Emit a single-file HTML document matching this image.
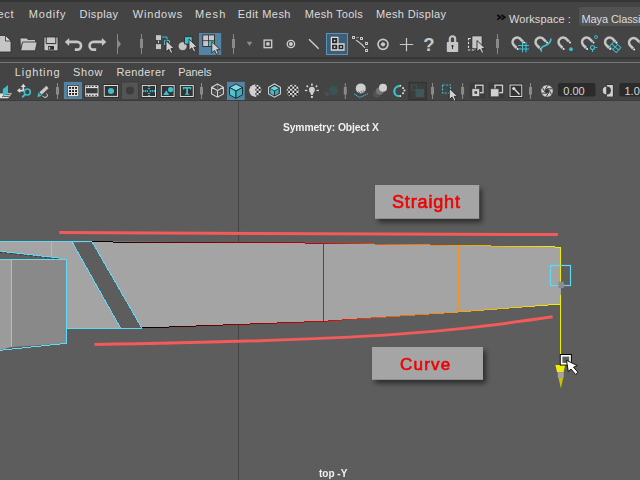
<!DOCTYPE html>
<html><head><meta charset="utf-8">
<style>
html,body{margin:0;padding:0;width:640px;height:480px;overflow:hidden;background:#444444;}
body{position:relative;font-family:"Liberation Sans",sans-serif;}
.a{position:absolute;}
.m{position:absolute;font-size:12px;line-height:14px;color:#dcdcdc;white-space:nowrap;}
svg{position:absolute;left:0;top:0;}
.lb{position:absolute;font-weight:bold;color:#f00000;white-space:nowrap;will-change:transform;}
.hud{position:absolute;font-weight:bold;color:#f0f0f0;white-space:nowrap;will-change:transform;}
</style></head><body>
<div class="a" style="left:0;top:0;width:640px;height:2px;background:#353535"></div>
<div class="m" style="left:-20.5px;top:7px;font-size:11px;letter-spacing:0.7px">Select</div>
<div class="m" style="left:28.7px;top:7px;font-size:11px;letter-spacing:0.86px">Modify</div>
<div class="m" style="left:79.6px;top:7px;font-size:11px;letter-spacing:0.4px">Display</div>
<div class="m" style="left:132.8px;top:7px;font-size:11px;letter-spacing:0.8px">Windows</div>
<div class="m" style="left:195px;top:7px;font-size:11px;letter-spacing:1.17px">Mesh</div>
<div class="m" style="left:237.8px;top:7px;font-size:11px;letter-spacing:0.47px">Edit Mesh</div>
<div class="m" style="left:304.8px;top:7px;font-size:11px;letter-spacing:0.29px">Mesh Tools</div>
<div class="m" style="left:375.9px;top:7px;font-size:11px;letter-spacing:0.37px">Mesh Display</div>
<svg width="640" height="30" style="left:0;top:0"><path d="M497.3,15 L500.6,17.3 L497.3,19.6 M501.5,15 L504.8,17.3 L501.5,19.6" fill="none" stroke="#0a0a0a" stroke-width="1.7"/></svg>
<div class="m" style="left:509px;top:11.5px;font-size:11px;letter-spacing:0.1px">Workspace :</div>
<div class="a" style="left:579px;top:7px;width:70px;height:19px;background:#525252;border-radius:3px"></div>
<div class="m" style="left:581.5px;top:11.5px;font-size:11px;letter-spacing:-0.1px">Maya Classic</div>
<div class="a" style="left:0;top:57px;width:640px;height:2px;background:#363636"></div>
<div class="a" style="left:0;top:59px;width:640px;height:3px;background:#414141"></div>
<div class="a" style="left:0;top:62px;width:640px;height:1px;background:#787878"></div>
<div class="m" style="left:14.8px;top:65px;font-size:11px;letter-spacing:0.89px">Lighting</div>
<div class="m" style="left:73px;top:65px;font-size:11px;letter-spacing:0.67px">Show</div>
<div class="m" style="left:116.4px;top:65px;font-size:11px;letter-spacing:0.41px">Renderer</div>
<div class="m" style="left:178.2px;top:65px;font-size:11px;letter-spacing:-0.05px">Panels</div>
<div class="a" style="left:0;top:100px;width:640px;height:1px;background:#3c3c3c"></div>
<div class="a" style="left:0;top:101px;width:640px;height:379px;background:#5d5d5d"></div>
<svg width="640" height="480" viewBox="0 0 640 480">
<defs>
 <linearGradient id="eg" gradientUnits="userSpaceOnUse" x1="92" y1="0" x2="560.5" y2="0">
  <stop offset="0" stop-color="#000000"/>
  <stop offset="0.145" stop-color="#600000"/>
  <stop offset="0.337" stop-color="#a00000"/>
  <stop offset="0.494" stop-color="#d40000"/>
  <stop offset="0.636" stop-color="#e86010"/>
  <stop offset="0.782" stop-color="#f0a010"/>
  <stop offset="0.892" stop-color="#f0c800"/>
  <stop offset="1" stop-color="#f4f000"/>
 </linearGradient>
 <linearGradient id="eg2" gradientUnits="userSpaceOnUse" x1="141.8" y1="0" x2="560.5" y2="0">
  <stop offset="0" stop-color="#000000"/>
  <stop offset="0.235" stop-color="#900000"/>
  <stop offset="0.434" stop-color="#d40000"/>
  <stop offset="0.593" stop-color="#e86010"/>
  <stop offset="0.757" stop-color="#f0a010"/>
  <stop offset="0.879" stop-color="#f0c800"/>
  <stop offset="1" stop-color="#f4f000"/>
 </linearGradient>
 <filter id="sh" x="-30%" y="-60%" width="160%" height="220%"><feGaussianBlur stdDeviation="2.6"/></filter>
</defs>
<line x1="238.5" y1="101" x2="238.5" y2="480" stroke="#444" stroke-width="1"/>
<!-- main face -->
<path d="M0,241.5 L92,241.5 L323.4,243 L458.6,245.4 L560.5,247 L560.5,304 L458.6,312 L323.4,321.3 L141.8,328 L66.5,328.4 L66.5,259 L0,259 Z" fill="#a4a4a4"/>
<!-- dark strip (hole) -->
<path d="M72.3,242.3 L92.2,242 L141.8,328 L120.5,328 Z" fill="#5d5d5d"/>
<!-- wedge -->
<path d="M0,251.3 L59,258 L59,259 L0,259 Z" fill="#5f5f5f"/>
<!-- inner panels -->
<path d="M11.3,259 H66.5 V343.5 L11.3,347 Z" fill="#898989"/>
<path d="M-1,259 H11.3 V347 L-1,350.2 Z" fill="#9b9b9b"/>
<!-- edges -->
<g fill="none" stroke-width="1" shape-rendering="crispEdges">
 <path d="M0,241.6 H92" stroke="#5edaf8"/>
 <path d="M51.3,241.6 V257.3" stroke="#5edaf8"/>
 <path d="M0,251.3 L59,258" stroke="#5edaf8"/>
 <path d="M0,259 H66.5" stroke="#5edaf8"/>
 <path d="M11.3,259 V347" stroke="#5edaf8"/>
 <path d="M66.5,259 V343.5" stroke="#5edaf8"/>
 <path d="M0,350.3 L66.5,343.3" stroke="#5edaf8"/>
 <path d="M66.5,328.4 H141.8" stroke="#5edaf8"/>
 <path d="M72.3,242.3 L120.5,328" stroke="#5edaf8"/>
 <path d="M92.2,242 L141.8,328" stroke="#5edaf8"/>
 <path d="M92,241.9 L323.4,243.1 L458.6,245.5 L560.5,247.1" stroke="url(#eg)"/>
 <path d="M141.8,328 L323.4,321.3 L458.6,312 L560.5,304" stroke="url(#eg2)"/>
 <path d="M323.4,242.9 V321.3" stroke="#cc1414"/>
 <path d="M458.6,245.4 V312" stroke="#ee9424"/>
 <path d="M560.5,247 V281.7 M560.5,295 V354" stroke="#f0ee00"/>
</g>
<path d="M0,252.3 L59,259" stroke="#2a2a2a" stroke-width="0.8" stroke-dasharray="2,3"/>
<!-- annotation lines -->
<path d="M59.4,232.6 L557.9,234.6" stroke="#f55a5a" stroke-width="3"/>
<path d="M94.5,344.6 C386.6,339.8 450.9,331.4 552.6,316.8" fill="none" stroke="#f55a5a" stroke-width="3"/>
<!-- manipulator -->
<rect x="550.5" y="265.5" width="20" height="20" fill="none" stroke="#5edaf8" stroke-width="1.2"/>
<rect x="558.3" y="281.7" width="5.5" height="6.3" fill="#8c8c8c"/><rect x="558.3" y="288" width="2.7" height="7" fill="#a4a4a4"/>
<path d="M555.4,365 H565.2 L563.5,372.3 H557.1 Z" fill="#f2ec00"/>
<rect x="557.8" y="372.3" width="6" height="5.5" fill="#a4a4a4"/>
<path d="M558.5,377.8 H563.2 L560.9,388.5 Z" fill="#c9c200"/>
<rect x="560.3" y="354.5" width="11" height="10.5" fill="none" stroke="#000" stroke-width="1"/>
<rect x="561.6" y="355.8" width="8.4" height="7.9" fill="none" stroke="#fff" stroke-width="1.6"/>
<path d="M566.5,360.3 L568.3,371.6 L570.9,369 L575.6,374.4 L578,372.4 L573.5,367.2 L577.2,365.6 Z" fill="#fff" stroke="#000" stroke-width="0.9" stroke-linejoin="round"/>
<!-- labels -->
<rect x="378" y="189" width="104" height="33.5" fill="#000" opacity="0.5" filter="url(#sh)"/>
<rect x="375" y="185" width="104.2" height="33.8" fill="#a5a5a5"/>
<rect x="375" y="351" width="111" height="32.5" fill="#000" opacity="0.5" filter="url(#sh)"/>
<rect x="372" y="347" width="111" height="32.8" fill="#a5a5a5"/>
</svg>

<div class="hud" style="left:283px;top:121.5px;font-size:10.3px;line-height:12px;letter-spacing:-0.12px">Symmetry: Object X</div>
<div class="hud" style="left:319px;top:468px;font-size:10px;line-height:12px">top -Y</div>
<div class="lb" style="left:392px;top:192px;font-size:18px;line-height:20px;font-weight:normal;-webkit-text-stroke:0.6px #f00000;letter-spacing:0.85px">Straight</div>
<div class="lb" style="left:400px;top:355px;font-size:17px;line-height:19px;letter-spacing:1.2px;font-weight:normal;-webkit-text-stroke:0.6px #f00000">Curve</div>
<svg width="640" height="101" viewBox="0 0 640 101">
<defs>
 <g id="cur"><path d="M0,0 L0,11.3 L2.8,8.8 L4.8,12.9 L6.7,12 L4.9,8.1 L8.4,8.1 Z" fill="#cfcfcf" stroke="#2a2a2a" stroke-width="0.9" stroke-linejoin="round"/></g>
 <g id="mag"><path d="M-0.4,6 L-3.18,3.18 A4.5,4.5 0 0 1 3.18,-3.18 L6,-0.4" fill="none" stroke="#c4c4c4" stroke-width="2.6"/>
   <circle cx="0.6" cy="7" r="1" fill="#eee"/><circle cx="7" cy="0.6" r="1" fill="#eee"/></g>
 <g id="sep"><rect x="-0.5" y="0" width="1" height="20" fill="#8a8a8a"/><rect x="-1.5" y="5" width="3" height="9" fill="#8a8a8a"/></g>
 <g id="sep2"><rect x="-0.5" y="0" width="1" height="16" fill="#8a8a8a"/><rect x="-1.5" y="4" width="3" height="7.5" fill="#8a8a8a"/></g>
 <pattern id="chk" width="4.2" height="4.2" patternUnits="userSpaceOnUse" x="0.3" y="0.5"><rect width="4.2" height="4.2" fill="#1e1e1e"/><rect width="2.1" height="2.1" fill="#e8e8e8"/><rect x="2.1" y="2.1" width="2.1" height="2.1" fill="#e8e8e8"/></pattern>
</defs>
<!-- ===== row 1 toolbar ===== -->
<!-- new scene -->
<path d="M-3,35.5 H5.5 L11,41 V52 H-3 Z" fill="#c6c6c6" stroke="#2e2e2e" stroke-width="0.8"/>
<path d="M5.5,35.5 L11,41 H5.5 Z" fill="#d8d8d8" stroke="#2e2e2e" stroke-width="0.8"/>
<!-- open -->
<path d="M20,38 H26.5 L28,39.5 H35.5 V43 H22.5 L20.5,50.8 Z" fill="#c6c6c6" stroke="#2e2e2e" stroke-width="0.8"/>
<path d="M22.5,42 H37.2 L35.3,50.8 H20.6 Z" fill="#c6c6c6" stroke="#2e2e2e" stroke-width="0.8"/>
<!-- save -->
<path d="M44,37 H58 V50.8 H45.5 L44,49.3 Z" fill="#c6c6c6" stroke="#2e2e2e" stroke-width="0.8"/>
<path d="M46.2,36.6 V43.6 H55.8 V36.6" fill="none" stroke="#2e2e2e" stroke-width="1"/>
<rect x="48" y="46" width="6" height="3.7" fill="#2e2e2e"/><rect x="48.8" y="47" width="1.3" height="2" fill="#c6c6c6"/>
<!-- undo / redo -->
<path d="M69,41.9 H77.2 A3.85,3.85 0 0 1 77.2,49.6 H74.8" fill="none" stroke="#c6c6c6" stroke-width="2.6"/>
<path d="M64.8,41.9 L69.2,37.9 V45.9 Z" fill="#c6c6c6"/>
<path d="M102,41.9 H93.4 A3.85,3.85 0 0 0 93.4,49.6 H96.2" fill="none" stroke="#c6c6c6" stroke-width="2.6"/>
<path d="M106.3,41.9 L101.9,37.9 V45.9 Z" fill="#c6c6c6"/>
<!-- triangle separator -->
<rect x="117" y="34" width="1" height="20" fill="#8a8a8a"/>
<path d="M117.5,39.5 L121,44 L117.5,48.5 Z" fill="#8a8a8a"/>
<use href="#sep" x="141.5" y="34"/>
<!-- hierarchy -->
<rect x="155.5" y="34.8" width="6" height="5.6" fill="#c6c6c6" stroke="#2e2e2e" stroke-width="0.7"/>
<rect x="158" y="40.5" width="1" height="2.5" fill="#c6c6c6"/>
<rect x="155.5" y="43.8" width="6" height="5.8" fill="#c6c6c6" stroke="#2e2e2e" stroke-width="0.7"/>
<path d="M162,37 H167 V39.5" fill="none" stroke="#3cc0cf" stroke-width="1"/>
<path d="M164.5,45 V40.5 H169.5 V43" fill="none" stroke="#3cc0cf" stroke-width="1"/>
<use href="#cur" x="166" y="40.5"/>
<!-- object -->
<circle cx="182.6" cy="46.2" r="4.4" fill="#c6c6c6" stroke="#2e2e2e" stroke-width="0.6"/>
<rect x="184.6" y="36.7" width="7.6" height="7.3" fill="#3cc0cf" stroke="#2a2a2a" stroke-width="0.8"/>
<use href="#cur" x="189" y="39.1"/>
<!-- component (highlighted) -->
<rect x="199" y="33" width="22.2" height="22" fill="#5284a6"/>
<rect x="202.3" y="34.5" width="12.6" height="12.4" fill="#2e2e2e"/>
<rect x="203.2" y="35.4" width="5" height="4.9" fill="#c8c8c8"/><rect x="209" y="35.4" width="5" height="4.9" fill="#c8c8c8"/>
<rect x="203.2" y="41.1" width="5" height="4.9" fill="#c8c8c8"/><rect x="209" y="41.1" width="5" height="4.9" fill="#3cc0cf"/>
<use href="#cur" x="211.8" y="41.6"/>
<use href="#sep" x="233.5" y="34"/>
<path d="M246.7,41.8 H252.3 L249.5,46 Z" fill="#8a8a8a"/>
<rect x="264.1" y="40.1" width="7.6" height="7.6" fill="none" stroke="#d0d0d0" stroke-width="1.3"/>
<rect x="266.3" y="42.3" width="3.2" height="3.2" fill="#d0d0d0"/>
<circle cx="290.9" cy="44" r="3.7" fill="none" stroke="#d0d0d0" stroke-width="1.3"/>
<circle cx="290.9" cy="44" r="1.9" fill="#d0d0d0"/>
<line x1="309" y1="39.2" x2="318.7" y2="48.7" stroke="#d0d0d0" stroke-width="1.3"/>
<!-- outlined toggle -->
<rect x="326.5" y="33.5" width="21" height="21" fill="#3d5e77" stroke="#5a92ba" stroke-width="1"/>
<path d="M331.4,37.3 H337.9 V44 H344 V50 H331.4 Z" fill="#2a2a2a" stroke="#dadada" stroke-width="1.3"/>
<path d="M331.4,44 H337.9 V50" fill="none" stroke="#dadada" stroke-width="1.3"/>
<circle cx="334.6" cy="40.6" r="0.9" fill="#e0e0e0"/><circle cx="334.6" cy="47" r="0.9" fill="#e0e0e0"/><circle cx="341" cy="47" r="0.9" fill="#e0e0e0"/>
<!-- curve points -->
<path d="M356,40 Q362,44 365,48" fill="none" stroke="#c8c8c8" stroke-width="1.1"/>
<path d="M356.2,37.5 H358.8 M364.8,41 L365.5,42 M367,47.5 V48.5" stroke="#aaa" stroke-width="0.8"/>
<rect x="351.7" y="35.7" width="3.6" height="3.6" fill="#d8d8d8" stroke="#2a2a2a" stroke-width="0.7"/><circle cx="353.5" cy="37.5" r="0.6" fill="#2a2a2a"/><rect x="359.7" y="36.7" width="3.6" height="3.6" fill="#d8d8d8" stroke="#2a2a2a" stroke-width="0.7"/><circle cx="361.5" cy="38.5" r="0.6" fill="#2a2a2a"/><rect x="364.7" y="41.7" width="3.6" height="3.6" fill="#d8d8d8" stroke="#2a2a2a" stroke-width="0.7"/><circle cx="366.5" cy="43.5" r="0.6" fill="#2a2a2a"/><rect x="364.7" y="48.7" width="3.6" height="3.6" fill="#d8d8d8" stroke="#2a2a2a" stroke-width="0.7"/><circle cx="366.5" cy="50.5" r="0.6" fill="#2a2a2a"/>
<circle cx="383" cy="44.3" r="5" fill="none" stroke="#c8c8c8" stroke-width="1.7"/>
<circle cx="383" cy="44.3" r="2.1" fill="#c8c8c8"/>
<path d="M399.8,44.5 H413.2 M406.5,37.9 V51.2" stroke="#c8c8c8" stroke-width="1.2"/>
<text x="423.2" y="51.4" font-family="Liberation Sans" font-weight="bold" font-size="18.5" fill="#c8c8c8">?</text>
<!-- lock -->
<path d="M449.8,42.5 V39 A2.7,2.7 0 0 1 455.2,39 V42.5" fill="none" stroke="#c6c6c6" stroke-width="2.1"/>
<rect x="446.8" y="42" width="11.4" height="10" rx="0.8" fill="#c6c6c6"/>
<circle cx="452.5" cy="46" r="1.1" fill="#2e2e2e"/><rect x="452" y="46" width="1" height="3" fill="#2e2e2e"/>
<!-- select dashed -->
<rect x="468.5" y="38.5" width="6.5" height="11.5" fill="none" stroke="#dcdcdc" stroke-width="1.1" stroke-dasharray="2.2,1.6"/>
<rect x="472" y="36" width="10" height="12.5" fill="#c6c6c6" stroke="#2e2e2e" stroke-width="0.6"/>
<use href="#cur" x="477" y="40.5"/>
<use href="#sep" x="497.5" y="34"/>
<!-- magnets -->
<use href="#mag" x="517" y="42"/>
<path d="M522.5,42 V52.3 M526,42 V52.3 M518,45.5 H529 M518,49 H529" stroke="#3cc0cf" stroke-width="1.1"/>
<use href="#mag" x="540" y="42"/>
<path d="M550.9,38.5 C551.5,44 546,45 543,46.5 C541,47.5 541,50 541.5,51.8" fill="none" stroke="#3cc0cf" stroke-width="1.6"/>
<use href="#mag" x="563" y="42"/>
<circle cx="571" cy="49.2" r="1.9" fill="#3cc0cf"/>
<use href="#mag" x="586.5" y="42"/>
<circle cx="596" cy="37" r="1.5" fill="none" stroke="#3cc0cf" stroke-width="0.9"/>
<circle cx="592.5" cy="47.5" r="2" fill="none" stroke="#3cc0cf" stroke-width="1.1"/>
<path d="M592.5,50 V52 M595.3,47.5 H597.3" stroke="#3cc0cf" stroke-width="1"/>
<g transform="translate(615.2,47) rotate(42)" fill="none" stroke="#3cc0cf" stroke-width="0.95"><rect x="-4.6" y="-3.4" width="9.2" height="6.8"/><path d="M-4.6,0 H4.6 M0,-3.4 V3.4"/></g>
<use href="#mag" x="609.5" y="42"/>
<use href="#mag" x="633.5" y="42.5"/>

<!-- ===== row 2 panel toolbar ===== -->
<path d="M0,93.6 L12,93.3 L8.2,98.2 L0,98.2 Z" fill="#e0e0e0"/>
<path d="M3,94.7 L10.4,94.6 M2,96.5 L9,96.4" stroke="#3a3a3a" stroke-width="0.8"/>
<path d="M2.8,89.2 L8,85 V92.8 L2.8,97 Z" fill="#3cc0cf"/>
<!-- move magnify -->
<path d="M23.3,86.5 V90.6 H19.5" fill="none" stroke="#dcdcdc" stroke-width="1.6"/>
<path d="M23.3,83.8 L20.8,87 H25.8 Z M17,90.5 L20.2,88 V93 Z" fill="#dcdcdc"/>
<circle cx="27.3" cy="92" r="3" fill="none" stroke="#3cc0cf" stroke-width="1.5"/>
<line x1="25" y1="94.5" x2="22.2" y2="97.3" stroke="#3cc0cf" stroke-width="1.8"/>
<!-- brush -->
<line x1="47.5" y1="87" x2="40.5" y2="93.5" stroke="#c8c8c8" stroke-width="3.2"/>
<path d="M38.2,92.5 L41.6,95.8 L37.5,97.3 Z" fill="#3cc0cf"/>
<path d="M42.5,96 Q45,98.5 47,96.8 Q48.3,95 46.5,93.5" fill="none" stroke="#d0d0d0" stroke-width="1"/>
<use href="#sep2" x="57.5" y="83"/>
<!-- grid highlighted -->
<rect x="63.9" y="81.9" width="18.1" height="17.2" fill="#5284a6"/>
<rect x="67.1" y="85.1" width="11.8" height="11.8" fill="#2a2a2a"/>
<rect x="67.8" y="85.8" width="10.6" height="10.6" fill="#e4e4e4"/>
<g fill="#1a1a1a"><rect x="69.1" y="87" width="1.9" height="1.9"/><rect x="72.1" y="87" width="1.9" height="1.9"/><rect x="75.1" y="87" width="1.9" height="1.9"/>
<rect x="69.1" y="90.1" width="1.9" height="1.9"/><rect x="72.1" y="90.1" width="1.9" height="1.9"/><rect x="75.1" y="90.1" width="1.9" height="1.9"/>
<rect x="69.1" y="93" width="1.9" height="1.9"/><rect x="72.1" y="93" width="1.9" height="1.9"/><rect x="75.1" y="93" width="1.9" height="1.9"/></g>
<!-- film gate -->
<rect x="84.5" y="84.7" width="14.7" height="12.5" fill="#2a2a2a"/>
<rect x="85.2" y="85.3" width="13.3" height="11.3" fill="#e0e0e0"/>
<rect x="86" y="88.1" width="11.6" height="5.3" fill="#3a3a3a"/>
<g fill="#2a2a2a"><rect x="86.2" y="85.8" width="1.7" height="1" /><rect x="89" y="85.8" width="1.7" height="1"/><rect x="92" y="85.8" width="1.7" height="1"/><rect x="95.3" y="85.8" width="1.7" height="1"/>
<rect x="86.2" y="94.8" width="1.7" height="1" /><rect x="89" y="94.8" width="1.7" height="1"/><rect x="92" y="94.8" width="1.7" height="1"/><rect x="95.3" y="94.8" width="1.7" height="1"/></g>
<!-- resolution gate -->
<rect x="104.2" y="85.5" width="13.4" height="10.9" fill="none" stroke="#262626" stroke-width="2.6"/><rect x="104.2" y="85.5" width="13.4" height="10.9" fill="#333" stroke="#dcdcdc" stroke-width="1"/>
<circle cx="111" cy="91" r="3" fill="#3cc0cf"/>
<!-- gate mask -->
<rect x="121.5" y="82" width="17" height="17.8" fill="#545454" stroke="#3a3a3a" stroke-width="0.8"/>
<circle cx="130" cy="90.6" r="4" fill="#3c3c3c"/>
<!-- field chart -->
<rect x="142.3" y="85.4" width="13.2" height="11.1" fill="none" stroke="#262626" stroke-width="2.6"/><rect x="142.3" y="85.4" width="13.2" height="11.1" fill="#333" stroke="#dcdcdc" stroke-width="1"/>
<g fill="#3cc0cf"><rect x="142.7" y="90" width="1.2" height="2.1"/><rect x="144.7" y="90" width="1.2" height="2.1"/><rect x="146.7" y="90" width="1.2" height="2.1"/><rect x="149.7" y="90" width="1.2" height="2.1"/><rect x="151.7" y="90" width="1.2" height="2.1"/><rect x="153.8" y="90" width="1.2" height="2.1"/><rect x="147.9" y="85.75" width="2.2" height="1.1"/><rect x="147.9" y="87.95" width="2.2" height="1.1"/><rect x="147.9" y="92.85" width="2.2" height="1.1"/><rect x="147.9" y="95.05" width="2.2" height="1.1"/></g>
<!-- safe action -->
<rect x="161.25" y="85.4" width="12.9" height="11.1" fill="none" stroke="#262626" stroke-width="2.6"/><rect x="161.25" y="85.4" width="12.9" height="11.1" fill="#333" stroke="#dcdcdc" stroke-width="1"/>
<path d="M163.3,95 L166.3,90.3 L169.3,95 Z" fill="#3cc0cf"/><circle cx="170.6" cy="89.6" r="2.6" fill="#3cc0cf"/>
<!-- safe title -->
<rect x="180.3" y="85.4" width="13" height="11.1" fill="none" stroke="#262626" stroke-width="2.6"/><rect x="180.3" y="85.4" width="13" height="11.1" fill="#333" stroke="#dcdcdc" stroke-width="1"/>
<path d="M183,87 H191.2 V89.4 H190.4 L189.6,88.4 H188 V93.8 H189.2 V94.7 H185 V93.8 H186.2 V88.4 H184.6 L183.8,89.4 H183 Z" fill="#3cc0cf"/>
<use href="#sep2" x="201.5" y="83"/>
<!-- wire cube -->
<g transform="translate(217.5,90.6)" fill="none" stroke-width="1.1">
 <path d="M0,-6.6 L5.9,-3.3 V3.3 L0,6.6 L-5.9,3.3 V-3.3 Z M-5.9,-3.3 L0,0 L5.9,-3.3 M0,0 V6.6" stroke="#d4d4d4"/>
 <path d="M0,-5.5 V-2 M-3.5,2.5 L-1.5,1.5 M3.5,2.5 L1.5,1.5" stroke="#777" stroke-width="0.9"/>
</g>
<!-- shaded cube highlighted -->
<rect x="227" y="81.9" width="17.8" height="18.1" fill="#5284a6"/>
<g transform="translate(236,91)" stroke="#222" stroke-width="0.9" stroke-linejoin="round">
 <path d="M0,-7 L6.5,-3.5 L0,0 L-6.5,-3.5 Z" fill="#7fd9e2"/>
 <path d="M-6.5,-3.5 L0,0 V7.3 L-6.5,3.8 Z" fill="#4cc3cf"/>
 <path d="M6.5,-3.5 L0,0 V7.3 L6.5,3.8 Z" fill="#3aaebe"/>
</g>
<!-- half checker sphere -->
<circle cx="255.4" cy="90.6" r="6.1" fill="url(#chk)"/>
<path d="M255.4,84.5 A6.1,6.1 0 0 0 255.4,96.7 Z" fill="#d0d0d0"/>
<!-- wire on shaded -->
<g transform="translate(274.5,90.6)">
 <path d="M0,-6.6 L5.9,-3.3 V3.3 L0,6.6 L-5.9,3.3 V-3.3 Z" fill="#2e2e2e" stroke="#d4d4d4" stroke-width="1.1"/>
 <path d="M0,-4.6 L4.2,-2.4 L0,-0.2 L-4.2,-2.4 Z" fill="#6fd4de"/>
 <path d="M-4.2,-1.6 L-0.5,0.5 V4.8 L-4.2,2.6 Z" fill="#3cc0cf"/>
 <path d="M4.2,-1.6 L0.5,0.5 V4.8 L4.2,2.6 Z" fill="#32aebd"/>
</g>
<!-- checker sphere -->
<circle cx="292.9" cy="90.7" r="6.3" fill="url(#chk)"/>
<!-- bulb -->
<circle cx="311.9" cy="89.6" r="2.9" fill="#cfcfcf"/>
<path d="M309.1,90.4 Q310.6,93.3 311.1,95 H312.7 Q313.2,93.3 314.7,90.4 Z" fill="#cfcfcf"/>
<rect x="310.9" y="96" width="2" height="1.9" fill="#d4d4d4"/>
<g fill="#d4d4d4"><rect x="311" y="83.6" width="1.8" height="1.9"/><rect x="304.9" y="89.8" width="2.4" height="1.3"/><rect x="316.5" y="89.8" width="2.4" height="1.3"/>
<rect x="306.4" y="85.4" width="1.8" height="1.8" transform="rotate(45 307.3 86.3)"/><rect x="315.6" y="85.4" width="1.8" height="1.8" transform="rotate(45 316.5 86.3)"/></g>
<!-- faded sphere -->
<circle cx="333.4" cy="90.3" r="4.6" fill="#3a5354"/>
<path d="M324,93 L328,96 M325.5,91.8 L329.5,94.8" stroke="#5e5e5e" stroke-width="0.9"/>
<use href="#sep2" x="345.3" y="83"/>
<!-- shadows -->
<circle cx="360.8" cy="88.4" r="5" fill="#cfcfcf"/>
<path d="M358.5,91.5 L360,93.5 M360.8,91 L362.5,93.2 M363.2,90.5 L364.8,92.6" stroke="#555" stroke-width="0.9"/>
<path d="M354.3,94 L359.8,97.4 L367.8,93.8" fill="none" stroke="#3cc0cf" stroke-width="1.1" stroke-dasharray="1.3,0.7"/>
<circle cx="376.7" cy="94" r="3.8" fill="#525252"/>
<circle cx="379.8" cy="91" r="3.8" fill="#747474"/>
<circle cx="383" cy="87.8" r="4" fill="#cfcfcf"/>
<!-- AA circle -->
<path d="M399.3,86.2 A5,5 0 0 0 399.3,96.2" fill="none" stroke="#3cc0cf" stroke-width="2.2"/>
<g fill="#e8e8e8"><rect x="399.4" y="84.9" width="1.7" height="1.7"/><rect x="402.2" y="87.2" width="1.7" height="1.7"/><rect x="403.6" y="89.6" width="1.7" height="1.7"/><rect x="402.2" y="92.4" width="1.7" height="1.7"/><rect x="399.4" y="95.2" width="1.7" height="1.7"/></g>
<!-- dark box -->
<rect x="409" y="82.3" width="17.5" height="17.2" fill="#3d3d3d" stroke="#303030" stroke-width="0.8"/>
<rect x="411.5" y="85" width="5" height="5" fill="none" stroke="#3b5354" stroke-width="0.9"/>
<rect x="415.5" y="89" width="8.5" height="8" fill="#3d5859"/>
<use href="#sep2" x="432.5" y="83"/>
<!-- isolate select -->
<rect x="442.5" y="85" width="8" height="8" fill="none" stroke="#3cc0cf" stroke-width="1.2" stroke-dasharray="2,1.3"/>
<use href="#cur" x="449.3" y="88.3"/>
<use href="#sep2" x="462.6" y="83"/>
<!-- xray boxes -->
<rect x="469.5" y="82.5" width="16" height="16" fill="#3c3c3c"/>
<rect x="475.5" y="85.2" width="7.5" height="7.5" fill="none" stroke="#d0d0d0" stroke-width="1.3"/>
<rect x="472" y="88.8" width="7.5" height="7.5" fill="#d0d0d0" stroke="#3c3c3c" stroke-width="0.6"/>
<rect x="474.5" y="91.2" width="2.6" height="2.6" fill="#3c3c3c"/>
<rect x="488.5" y="82.5" width="16" height="16" fill="#3c3c3c"/>
<rect x="495" y="85.2" width="7.5" height="7.5" fill="none" stroke="#d0d0d0" stroke-width="1.3"/>
<rect x="490.7" y="88.8" width="8.2" height="8" fill="#d0d0d0" stroke="#3c3c3c" stroke-width="0.6"/>
<!-- texture -->
<rect x="510" y="85" width="11.8" height="11.5" fill="none" stroke="#262626" stroke-width="2.6"/><rect x="510" y="85" width="11.8" height="11.5" fill="#333" stroke="#dcdcdc" stroke-width="1"/>
<circle cx="513.8" cy="88.5" r="1.6" fill="#dcdcdc"/>
<line x1="514.5" y1="89.2" x2="519.5" y2="94.5" stroke="#dcdcdc" stroke-width="1.3"/>
<use href="#sep2" x="530.5" y="83"/>
<!-- aperture -->
<circle cx="547" cy="91" r="6.3" fill="#cfcfcf" stroke="#2e2e2e" stroke-width="0.8"/>
<path d="M547.00,88.80 L552.20,88.80 M548.91,89.90 L551.51,94.40 M548.91,92.10 L546.31,96.60 M547.00,93.20 L541.80,93.20 M545.09,92.10 L542.49,87.60 M545.09,89.90 L547.69,85.40" stroke="#2e2e2e" stroke-width="0.9"/>
<circle cx="547" cy="91" r="2.2" fill="#3a3a3a"/>
<!-- fields -->
<rect x="558" y="83" width="37.5" height="13.6" rx="2" fill="#2b2b2b"/>
<text x="563.3" y="94.8" font-family="Liberation Sans" font-size="11" fill="#d6d6d6">0.00</text>
<circle cx="606.7" cy="90.6" r="4.6" fill="#2a2a2a"/>
<path d="M606.7,86.6 A4,4 0 0 0 606.7,94.6 Z" fill="#cfcfcf"/>
<rect x="606.4" y="84.5" width="7" height="12.6" fill="#2a2a2a"/>
<rect x="606.9" y="85" width="6" height="11.6" fill="#cfcfcf"/>
<path d="M606.9,86.6 A4,4 0 0 1 606.9,94.6 Z" fill="#3a3a3a"/>
<rect x="619.3" y="83" width="30" height="13.6" rx="2" fill="#2b2b2b"/>
<text x="624.5" y="94.8" font-family="Liberation Sans" font-size="11" fill="#d6d6d6">1.00</text>
</svg>

</body></html>
